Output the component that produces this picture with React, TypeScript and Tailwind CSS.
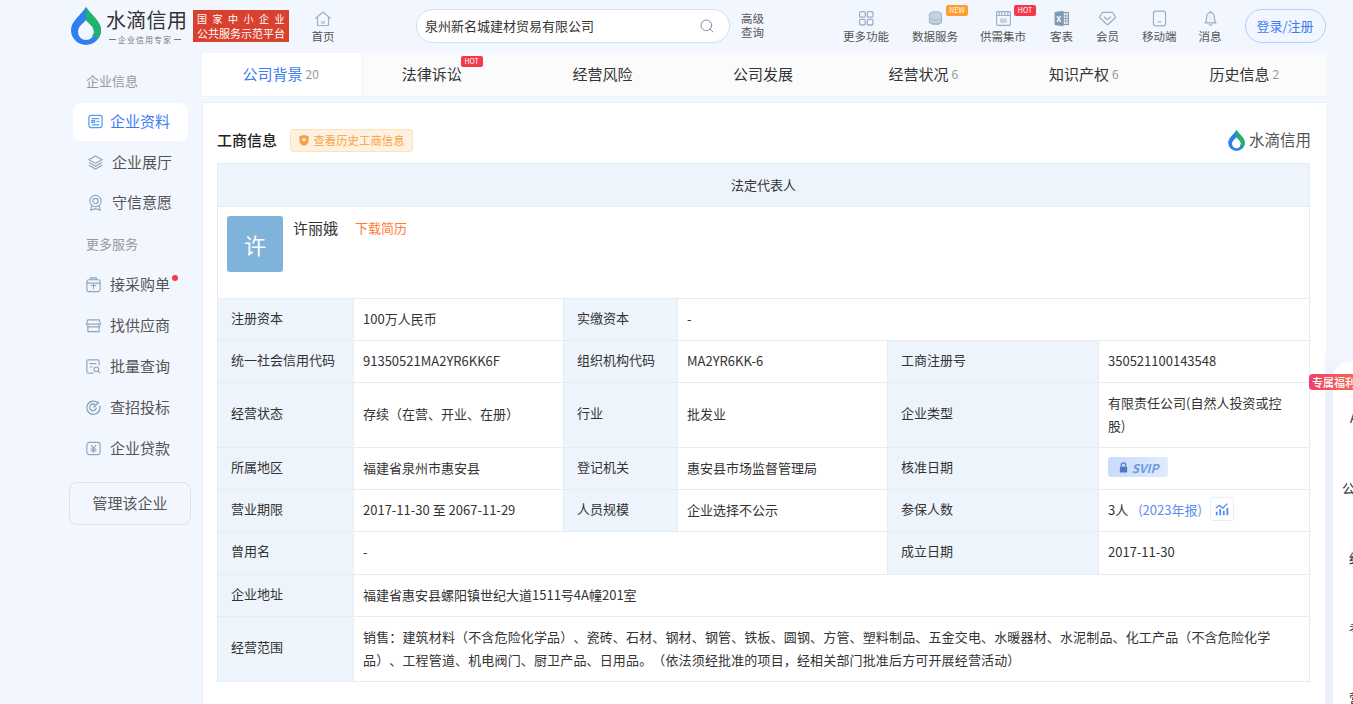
import { Search } from "lucide-react";

const font = "font-['Noto_Sans_CJK_SC','Noto_Sans',sans-serif]";

function Drop({ className }: { className: string }) {
  return (
    <svg viewBox="0 0 30 38" className={className}>
      <path fillRule="evenodd" d="M15 0C10 8 0 14 0 23a15 15 0 0 0 30 0C30 14 20 8 15 0zM15 13c-3 4-8 6-8 12a8 8 0 0 0 16 0c0-6-5-8-8-12z" fill="#2f80ed" />
      <path d="M15 0C20 8 30 14 30 23c0 3-1 6-2.500 8L21 28.500c1.300-1 2-2 2-3.500 0-6-5-8-8-12z" fill="#1fb36b" />
    </svg>
  );
}

const topItems = [
  { label: "更多功能", gap: "mr-[23px]", icon: <g fill="none" stroke="#9db0c4" strokeWidth="1.500"><rect x="3" y="3" width="6.500" height="6.500" rx="1.500" /><rect x="12" y="3" width="6.500" height="6.500" rx="1.500" /><rect x="3" y="12" width="6.500" height="6.500" rx="1.500" /><rect x="12" y="12" width="6.500" height="6.500" rx="1.500" /></g> },
  { label: "数据服务", gap: "mr-[22px]", badge: "NEW", icon: <g fill="#c5d2df" stroke="#9db0c4"><ellipse cx="11" cy="6" rx="7" ry="3" /><path d="M4 6v9c0 1.700 3 3 7 3s7-1.300 7-3V6" /><path d="M4 10c0 1.700 3 3 7 3s7-1.300 7-3M4 14c0 1.700 3 3 7 3s7-1.300 7-3" fill="none" /></g> },
  { label: "供需集市", gap: "mr-[24px]", badge: "HOT", icon: <g fill="none" stroke="#9db0c4" strokeWidth="1.300"><rect x="3" y="3" width="16" height="16" rx="1" /><path d="M3 7.500h16M6 3v4.500M9 3v4.500M12.500 3v4.500M16 3v4.500" /><rect x="7" y="11" width="8" height="5" fill="#c5d2df" stroke="none" /></g> },
  { label: "客表", gap: "mr-[23px]", icon: <g><path d="M3 3.500 13 2v18L3 18.500z" fill="#7f9ab3" /><rect x="13" y="4" width="6" height="14" fill="none" stroke="#7f9ab3" strokeWidth="1.300" /><path d="M13 8h6M13 11h6M13 14h6M16 4v14" stroke="#7f9ab3" /><text x="5" y="14.500" fontSize="9" fill="#fff" fontWeight="700">X</text></g> },
  { label: "会员", gap: "mr-[23px]", icon: <g fill="none" stroke="#9db0c4" strokeWidth="1.400"><path d="M5 4h12l3.500 5.500L11 18.500 1.500 9.500z" strokeLinejoin="round" /><path d="M7 9l4 3.500L15 9" /></g> },
  { label: "移动端", gap: "mr-[22px]", icon: <g fill="none" stroke="#9db0c4" strokeWidth="1.400"><rect x="4" y="2.500" width="14" height="17" rx="2.500" /><path d="M9 15h4" /></g> },
  { label: "消息", gap: "", icon: <g fill="none" stroke="#9db0c4" strokeWidth="1.400"><path d="M5 16c1-1.500 1.500-2.500 1.500-6S8.500 4 11 4s4.500 2.500 4.500 6 .5 4.500 1.500 6z" fill="#eef2f7" /><path d="M11 2v2M9 18.500h4" /></g> },
];

const tabs = [
  { label: "公司背景", n: "20", active: true },
  { label: "法律诉讼", hot: true },
  { label: "经营风险" },
  { label: "公司发展" },
  { label: "经营状况", n: "6" },
  { label: "知识产权", n: "6" },
  { label: "历史信息", n: "2" },
];

const ic = "#8fa5bb";
const sideIcons = {
  data: <g fill="none" stroke="#5b9bf5" strokeWidth="1.300"><rect x="2" y="2.500" width="14" height="13" rx="2.500" /><path d="M5 6h8M5 12.500h8" /><rect x="5" y="8" width="3" height="2" /><path d="M10 9h3" /></g>,
  layers: <g fill="none" stroke={ic} strokeWidth="1.200"><path d="M9 2 16 6 9 10 2 6z" /><path d="M2 9l7 4 7-4M2 12l7 4 7-4" /></g>,
  badge: <g fill="none" stroke={ic} strokeWidth="1.200"><circle cx="9" cy="7.500" r="6" /><circle cx="9" cy="7.500" r="2.800" /><path d="M5 12.500 4 17l5-1.500 5 1.500-1-4.500" /></g>,
  order: <g fill="none" stroke={ic} strokeWidth="1.200"><rect x="2" y="4" width="14" height="12.500" rx="2" /><path d="M6 4V2h6v2M2 7.500h14M6 10h6M9 8.500V14" /></g>,
  shop: <g fill="none" stroke={ic} strokeWidth="1.200"><path d="M3 3h12l1.500 4.500h-15z" /><path d="M3 8v7.500h12V8M2 10.500h14" /></g>,
  batch: <g fill="none" stroke={ic} strokeWidth="1.200"><path d="M15 8V3.500A1.500 1.500 0 0 0 13.500 2h-10A1.500 1.500 0 0 0 2 3.500v11A1.500 1.500 0 0 0 3.500 16H9" /><path d="M5 6h7M5 9.500h3" /><circle cx="12" cy="12" r="2.500" /><path d="m14 14 2 2" /></g>,
  bid: <g fill="none" stroke={ic} strokeWidth="1.400"><path d="M14 4.500A7 7 0 1 0 15.500 7" /><path d="M11.500 7A3.500 3.500 0 1 0 12 9" /><path d="M9 9l6-6" /></g>,
  loan: <g fill="none" stroke={ic} strokeWidth="1.200"><rect x="2" y="2.500" width="14" height="13" rx="2.500" /><path d="M6.500 5.500 9 9l2.500-3.500M6 9.500h6M6 11.500h6M9 9v4.500" /></g>,
};

const Label = ({ children }: { children: React.ReactNode }) => (
  <td className="border border-[#e4edf5] bg-[#eef4fb] pb-[4px] pl-[13px] text-[#333]">{children}</td>
);
const Value = ({ children, colSpan }: { children: React.ReactNode; colSpan?: number }) => (
  <td colSpan={colSpan} className="border border-[#e4edf5] bg-white px-[9px] pb-[3px] leading-[23px] text-[#333] [text-spacing-trim:space-all]">{children}</td>
);

function SideItem({ icon, label, dot, active, box }: { icon: React.ReactNode; label: string; dot?: boolean; active?: boolean; box: string }) {
  return (
    <div className={`relative flex h-[38px] w-[115px] items-center rounded-lg pb-[1px] text-[15px] ${box} ${active ? "bg-white text-[#3b7cf5]" : "text-[#555]"}`}>
      <svg viewBox="0 0 18 18" className="size-[17px] shrink-0">{icon}</svg>
      <span className="whitespace-nowrap">{label}</span>
      {dot && <span className="absolute right-[10px] top-[9px] size-[6px] rounded-full bg-[#fb3b3b]" />}
    </div>
  );
}

export default function App() {
  return (
    <div className={`relative h-[704px] w-[1353px] overflow-hidden bg-[#f2f6fe] text-[13px] ${font}`}>
      {/* top bar */}
      <header className="flex h-[53px] items-center pb-[2px] pl-[71px]">
        <Drop className="h-[38px] w-[30px]" />
        <div className="ml-[5px] w-[83px]">
          <div className="text-[20px] leading-[24px] tracking-[0.3px] text-[#333]">水滴信用</div>
          <div className="mt-[3px] flex items-center gap-[2px] whitespace-nowrap pl-[3px] text-[8px] leading-[9px] tracking-[1px] text-[#777]">
            <span className="h-px w-[7px] bg-[#777]" />
            企业信用专家
            <span className="h-px w-[7px] bg-[#777]" />
          </div>
        </div>
        <div className="ml-[4px] flex h-[32px] w-[96px] flex-col items-center justify-center whitespace-nowrap bg-[#d9412f] text-white">
          <div className="pl-[5px] text-[10px] leading-[14px] tracking-[5.500px]">国家中小企业</div>
          <div className="text-[11px] leading-[14px]">公共服务示范平台</div>
        </div>
        <div className="ml-[22px] mt-[2px] flex w-[24px] flex-col items-center text-[11.500px] text-[#555]">
          <svg viewBox="0 0 18 18" className="size-[18px]" fill="none" stroke="#9db0c4" strokeWidth="1.200"><path d="M1.500 8.500 9 2l7.500 6.500M3.500 7v8.500h11V7" /><rect x="7" y="11" width="4" height="3" fill="#c5d2df" stroke="none" /></svg>
          <span className="whitespace-nowrap leading-[16px]">首页</span>
        </div>
        <div className="ml-[81px] flex h-[34px] w-[314px] items-center justify-between rounded-[17px] border border-[#d5deea] bg-white pl-[8px] pr-[14px] text-[#333]">
          <span>泉州新名城建材贸易有限公司</span>
          <Search className="size-[16px] text-[#7f8fa3]" strokeWidth={1.500} />
        </div>
        <div className="mb-[2px] ml-[11px] w-[24px] text-[11.500px] leading-[14px] text-[#555]">高级查询</div>
        <div className="ml-[78px] mt-[2px] flex items-start">
          {topItems.map((t) => (
            <div key={t.label} className={`relative flex flex-col items-center text-[11.500px] text-[#555] ${t.gap}`}>
              <svg viewBox="0 0 22 22" className="size-[19px]">{t.icon}</svg>
              <span className="whitespace-nowrap leading-[16px]">{t.label}</span>
              {t.badge && (
                <span className={`absolute right-[-10px] top-[-4px] flex h-[11px] w-[22px] items-center justify-center rounded-[2px] text-[7px] text-white ${t.badge === "NEW" ? "bg-[#ff9d2e]" : "bg-[#f4394a]"}`}>{t.badge}</span>
              )}
            </div>
          ))}
        </div>
        <button className="ml-[23px] h-[34px] w-[81px] rounded-[17px] border border-[#b4cffb] text-[13px] text-[#3b7cf5]">登录/注册</button>
      </header>

      <div className="flex items-start pl-[69px]">
        {/* left menu */}
        <aside className="flex w-[133px] shrink-0 flex-col">
          <div className="flex h-[50px] items-center pl-[17px] pt-[6px] text-[#999]">企业信息</div>
          <div className="flex flex-col gap-[2.500px] pl-[4px]">
            <SideItem active box="gap-[6px] pl-[14px]" icon={sideIcons.data} label="企业资料" />
            <SideItem box="gap-[8px] pl-[14px]" icon={sideIcons.layers} label="企业展厅" />
            <SideItem box="gap-[8px] pl-[14px]" icon={sideIcons.badge} label="守信意愿" />
          </div>
          <div className="flex h-[44px] items-center pl-[17px] text-[#999]">更多服务</div>
          <div className="flex flex-col gap-[3px] pl-[4px]">
            <SideItem dot box="gap-[8px] pl-[12px]" icon={sideIcons.order} label="接采购单" />
            <SideItem box="gap-[8px] pl-[12px]" icon={sideIcons.shop} label="找供应商" />
            <SideItem box="gap-[8px] pl-[12px]" icon={sideIcons.batch} label="批量查询" />
            <SideItem box="gap-[8px] pl-[12px]" icon={sideIcons.bid} label="查招投标" />
            <SideItem box="gap-[8px] pl-[12px]" icon={sideIcons.loan} label="企业贷款" />
          </div>
          <button className="mt-[14px] h-[43px] w-[122px] rounded-lg border border-[#dbe3ee] text-[15px] text-[#555]">管理该企业</button>
        </aside>

        {/* main */}
        <main className="w-[1124px] shrink-0">
          <div className="flex h-[44px] border-b border-[#eef1f5] bg-[#fbfbfc]">
            {tabs.map((t) => (
              <div key={t.label} className={`flex flex-1 items-center justify-center gap-[3px] pb-[1px] pr-[3px] text-[15px] ${t.active ? "border-r border-[#eef1f5] bg-white text-[#3b7cf5]" : "text-[#333]"}`}>
                <span>{t.label}</span>
                {t.n && <span className="text-[12px] text-[#999]">{t.n}</span>}
                {t.hot && <span className="mb-[26px] ml-[-4px] flex h-[11px] w-[22px] items-center justify-center rounded-[2px] bg-[#f4394a] text-[7px] text-white">HOT</span>}
              </div>
            ))}
          </div>
          <div className="mt-[5px] h-[602px] border-l border-t border-[#e9eef5] bg-white px-[14px]">
            <div className="flex h-[60px] items-center justify-between pt-[14px]">
              <div className="flex items-center">
                <span className="text-[15px] font-medium text-[#222]">工商信息</span>
                <span className="ml-[13px] mt-[1px] flex h-[23px] w-[123px] items-center justify-center gap-[3px] rounded-[3px] border border-[#ffe1bd] bg-[#fff1e0] text-[11.400px] text-[#f8a145]">
                  <svg viewBox="0 0 12 14" className="h-[13px] w-[12px]"><path d="M6 1 11 2.500V7c0 3-2.500 5-5 6-2.500-1-5-3-5-6V2.500z" fill="#f8a145" /><circle cx="6" cy="6" r="2" fill="#ffe1bd" /></svg>
                  查看历史工商信息
                </span>
              </div>
              <div className="mr-[1px] flex items-center gap-[4px]">
                <Drop className="h-[21px] w-[17px]" />
                <span className="text-[15.500px] text-[#555]">水滴信用</span>
              </div>
            </div>
            <table className="w-[1092px] table-fixed border-collapse text-[13px]">
              <colgroup>
                <col className="w-[136px]" /><col className="w-[210px]" /><col className="w-[114px]" /><col className="w-[210px]" /><col className="w-[211px]" /><col className="w-[211px]" />
              </colgroup>
              <tbody>
                <tr className="h-[43px]">
                  <td colSpan={6} className="border border-[#e4edf5] bg-[#eef4fb] text-center text-[#333]">法定代表人</td>
                </tr>
                <tr className="h-[92px]">
                  <td colSpan={6} className="border border-[#e4edf5] bg-white px-[9px] pt-[9px] align-top">
                    <div className="flex items-start">
                      <div className="flex size-[56px] items-center justify-center rounded-[3px] bg-[#7fb3da] text-[22px] text-white">许</div>
                      <span className="ml-[10px] text-[15px] leading-[23px] text-[#333]">许丽娥</span>
                      <span className="ml-[17px] text-[13px] leading-[23px] text-[#ff7a35]">下载简历</span>
                    </div>
                  </td>
                </tr>
                <tr className="h-[42px]">
                  <Label>注册资本</Label><Value>100万人民币</Value><Label>实缴资本</Label><Value colSpan={3}>-</Value>
                </tr>
                <tr className="h-[42px]">
                  <Label>统一社会信用代码</Label><Value>91350521MA2YR6KK6F</Value><Label>组织机构代码</Label><Value>MA2YR6KK-6</Value><Label>工商注册号</Label><Value>350521100143548</Value>
                </tr>
                <tr className="h-[65px]">
                  <Label>经营状态</Label><Value>存续（在营、开业、在册）</Value><Label>行业</Label><Value>批发业</Value><Label>企业类型</Label>
                  <Value><div className="w-[185px]">有限责任公司(自然人投资或控股)</div></Value>
                </tr>
                <tr className="h-[42px]">
                  <Label>所属地区</Label><Value>福建省泉州市惠安县</Value><Label>登记机关</Label><Value>惠安县市场监督管理局</Value><Label>核准日期</Label>
                  <Value>
                    <span className="flex h-[20px] w-[60px] items-center justify-center gap-[3px] rounded-[3px] bg-gradient-to-r from-[#c9dcfa] to-[#e0ebfc] text-[12px] font-semibold italic text-[#6f9ae0]">
                      <svg viewBox="0 0 12 12" className="size-[11px]"><path d="M3.500 5V3.500a2.500 2.500 0 0 1 5 0V5" fill="none" stroke="#4a78c8" strokeWidth="1.300" /><rect x="2" y="5" width="8" height="6.500" rx="1" fill="#4a78c8" /></svg>
                      SVIP
                    </span>
                  </Value>
                </tr>
                <tr className="h-[42px]">
                  <Label>营业期限</Label><Value>2017-11-30 至 2067-11-29</Value><Label>人员规模</Label><Value>企业选择不公示</Value><Label>参保人数</Label>
                  <Value>
                    <span className="flex items-center">
                      3人
                      <span className="ml-[10px] text-[#5b8df0]">(2023年报)</span>
                      <span className="ml-[8px] flex size-[24px] items-center justify-center rounded-[3px] border border-[#e6eef8]">
                        <svg viewBox="0 0 18 18" className="size-[16px]" fill="none" stroke="#4f8ae8" strokeWidth="2"><path d="M3 16v-4M7 16V9M11 16v-5M15 16V8" /><path d="M2 8l4-3 4 3 5-5" strokeWidth="1.400" /></svg>
                      </span>
                    </span>
                  </Value>
                </tr>
                <tr className="h-[43px]">
                  <Label>曾用名</Label><Value colSpan={3}>-</Value><Label>成立日期</Label><Value>2017-11-30</Value>
                </tr>
                <tr className="h-[42px]">
                  <Label>企业地址</Label><Value colSpan={5}>福建省惠安县螺阳镇世纪大道1511号4A幢201室</Value>
                </tr>
                <tr className="h-[65px]">
                  <Label>经营范围</Label>
                  <Value colSpan={5}><div className="tracking-[0.15px]">销售：建筑材料（不含危险化学品）、瓷砖、石材、钢材、钢管、铁板、圆钢、方管、塑料制品、五金交电、水暖器材、水泥制品、化工产品（不含危险化学品）、工程管道、机电阀门、厨卫产品、日用品。（依法须经批准的项目，经相关部门批准后方可开展经营活动）</div></Value>
                </tr>
              </tbody>
            </table>
          </div>
        </main>
      </div>

      {/* floating side panel, cut off by the window */}
      <div className="absolute left-[1325px] top-[352px] h-[352px] w-[60px] bg-gradient-to-b from-[#f2f6fe] to-[#ebf0fc] to-[10%] pl-[8px] pt-[10px]">
        <div className="flex h-[342px] flex-col rounded-tl-2xl bg-white pt-[21px] text-[13px] leading-[70px] text-[#333]">
          <div className="h-[70px] pl-[17px]">A</div>
          <div className="h-[70px] pl-[9px]">公</div>
          <div className="h-[70px] pl-[16px]">经</div>
          <div className="h-[70px] pl-[16px]">考</div>
          <div className="h-[70px] pl-[16px]">营</div>
        </div>
      </div>
      <div className="absolute left-[1309px] top-[374px] flex h-[16px] w-[60px] items-center rounded-[4px] bg-gradient-to-r from-[#ef3f6a] to-[#f0734a] pl-[3px] text-[11px] font-medium text-white">专属福利</div>
    </div>
  );
}
